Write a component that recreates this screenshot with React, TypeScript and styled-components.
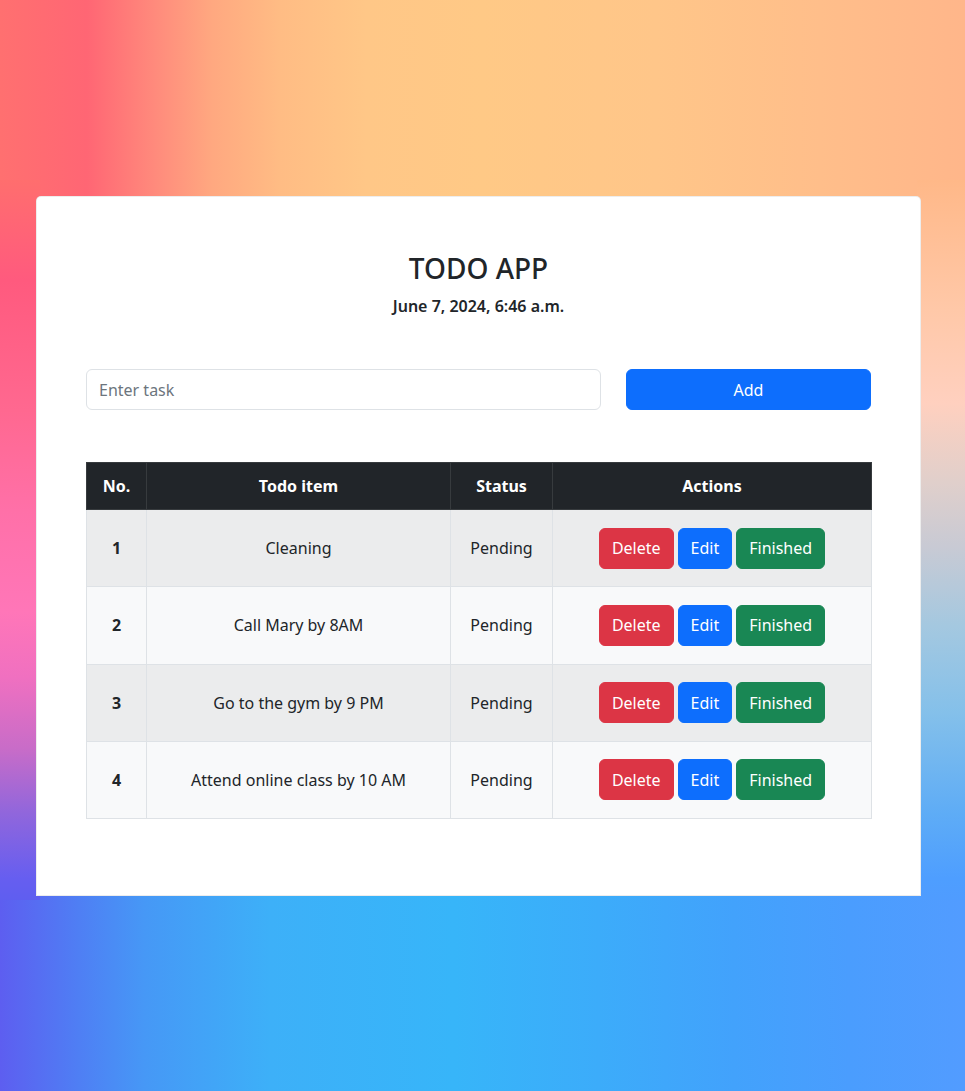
import React from "react";
import styled, { createGlobalStyle } from "styled-components";

const GlobalStyle = createGlobalStyle`
  html, body { margin: 0; padding: 0; }
  body {
    font-family: "Noto Sans", "Open Sans", Arial, sans-serif;
    color: #212529;
  }
  * { box-sizing: border-box; }
`;

const Page = styled.div`
  min-height: 1091px;
  padding: 196px 0 195px 36px;
  background:
    linear-gradient(
        to bottom,
        #ff6e6e 0%,
        #ff5a7e 14%,
        #ff6890 32%,
        #ff70a8 46%,
        #ff76b8 60%,
        #f070c0 69%,
        #c86cc8 79%,
        #9066dc 88%,
        #665ef0 97%,
        #5f5ef0 100%
      )
      left 0 top 180px / 40px 720px no-repeat,
    linear-gradient(
        to bottom,
        #ffb888 0%,
        #ffc8a8 18%,
        #ffd0bf 31%,
        #e0cfcb 42%,
        #c8cad4 51%,
        #a4c8e0 62%,
        #84c0ea 74%,
        #5eacf6 88%,
        #4e9eff 97%,
        #4f9cff 100%
      )
      right 0 top 180px / 48px 720px no-repeat,
    linear-gradient(
        to right,
        #ff7070 0%,
        #ff6674 9%,
        #ff8a7c 16%,
        #ffa880 22%,
        #ffbc84 29%,
        #ffc787 38%,
        #ffc986 50%,
        #ffc689 68%,
        #ffbe8a 85%,
        #ffb68a 100%
      )
      left top / 100% 200px no-repeat,
    linear-gradient(
        to right,
        #5d5ef0 0%,
        #4f7ef4 8%,
        #4698f6 15%,
        #3db0f8 28%,
        #37b5f9 47%,
        #3cacfa 62%,
        #42a2fc 76%,
        #4a9dfe 88%,
        #529cff 100%
      )
      left bottom / 100% 220px no-repeat,
    #ffb8a0;
`;

const Card = styled.main`
  width: 885px;
  height: 700px;
  background: #ffffff;
  border-radius: 5px 5px 0 0;
  border: 1px solid rgba(0, 0, 0, 0.07);
  padding: 54px 49px 0 49px;
  display: flex;
  flex-direction: column;
`;

const Header = styled.header`
  display: flex;
  flex-direction: column;
  align-items: center;
`;

const Title = styled.h2`
  margin: 0;
  font-size: 28px;
  line-height: 34px;
  font-weight: 500;
  color: #212529;
`;

const DateLine = styled.div`
  margin-top: 9px;
  font-size: 16px;
  line-height: 24px;
  font-weight: 600;
  color: #212529;
`;

const Form = styled.form`
  margin-top: 51px;
  display: grid;
  grid-template-columns: 515px 245px;
  column-gap: 25px;
`;

const Input = styled.input`
  height: 41px;
  border: 1px solid #dee2e6;
  border-radius: 6px;
  padding: 0 12px;
  font-family: inherit;
  font-size: 16px;
  color: #212529;
  background: #fff;
  outline: none;
  &::placeholder {
    color: #6c757d;
  }
`;

const AddButton = styled.button`
  height: 41px;
  border: 1px solid #0d6efd;
  border-radius: 6px;
  background: #0d6efd;
  color: #fff;
  font-family: inherit;
  font-size: 16px;
  cursor: pointer;
`;

const Table = styled.table`
  margin-top: 52px;
  width: 785px;
  border-collapse: collapse;
  table-layout: fixed;
  font-size: 16px;
`;

const HeadCell = styled.th`
  height: 47px;
  background: #212529;
  color: #fff;
  font-weight: 700;
  text-align: center;
  vertical-align: middle;
  border: 1px solid #373b3e;
  padding: 0 8px;
`;

const Row = styled.tr<{ $striped: boolean }>`
  background: ${(p) => (p.$striped ? "#ebeced" : "#f8f9fa")};
`;

const Cell = styled.td<{ $bold?: boolean }>`
  height: 77.25px;
  text-align: center;
  vertical-align: middle;
  border: 1px solid #dee2e6;
  padding: 0 8px;
  color: #212529;
  font-weight: ${(p) => (p.$bold ? 700 : 400)};
`;

const Actions = styled.div`
  display: flex;
  justify-content: center;
  gap: 4px;
`;

const ActionButton = styled.button<{ $color: string }>`
  height: 41px;
  padding: 0 12px;
  border: 1px solid ${(p) => p.$color};
  border-radius: 6px;
  background: ${(p) => p.$color};
  color: #fff;
  font-family: inherit;
  font-size: 16px;
  cursor: pointer;
`;

const todos = [
  "Cleaning",
  "Call Mary by 8AM",
  "Go to the gym by 9 PM",
  "Attend online class by 10 AM",
];

export default function App() {
  return (
    <>
      <GlobalStyle />
      <Page>
        <Card>
          <Header>
            <Title>TODO APP</Title>
            <DateLine>June 7, 2024, 6:46 a.m.</DateLine>
          </Header>
          <Form onSubmit={(e) => e.preventDefault()}>
            <Input type="text" placeholder="Enter task" />
            <AddButton type="submit">Add</AddButton>
          </Form>
          <Table>
            <colgroup>
              <col style={{ width: 60 }} />
              <col style={{ width: 304 }} />
              <col style={{ width: 102 }} />
              <col style={{ width: 319 }} />
            </colgroup>
            <thead>
              <tr>
                <HeadCell>No.</HeadCell>
                <HeadCell>Todo item</HeadCell>
                <HeadCell>Status</HeadCell>
                <HeadCell>Actions</HeadCell>
              </tr>
            </thead>
            <tbody>
              {todos.map((t, i) => (
                <Row key={t} $striped={i % 2 === 0}>
                  <Cell $bold>{i + 1}</Cell>
                  <Cell>{t}</Cell>
                  <Cell>Pending</Cell>
                  <Cell>
                    <Actions>
                      <ActionButton $color="#dc3545">Delete</ActionButton>
                      <ActionButton $color="#0d6efd">Edit</ActionButton>
                      <ActionButton $color="#198754">Finished</ActionButton>
                    </Actions>
                  </Cell>
                </Row>
              ))}
            </tbody>
          </Table>
        </Card>
      </Page>
    </>
  );
}
